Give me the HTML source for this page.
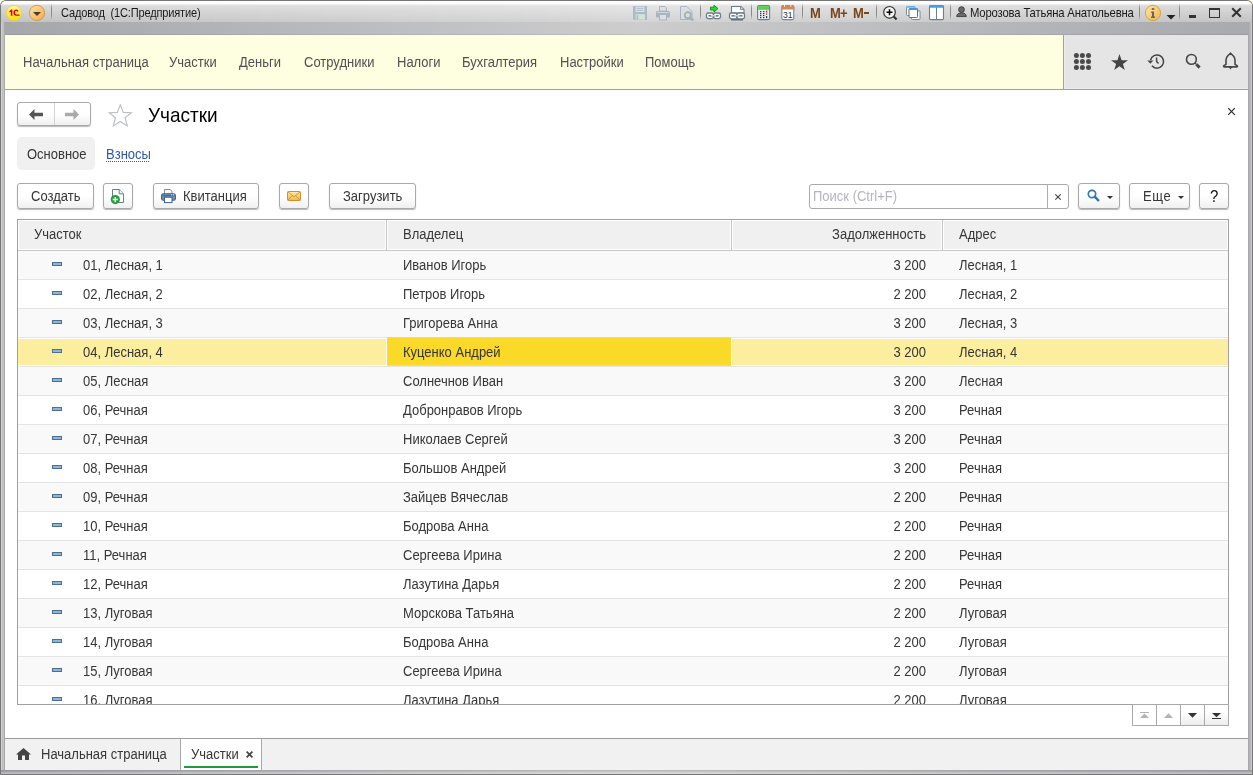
<!DOCTYPE html>
<html><head><meta charset="utf-8">
<style>
*{box-sizing:border-box;margin:0;padding:0}
html,body{width:1253px;height:775px;overflow:hidden;background:#fdfde8}
body{position:relative;font-family:"Liberation Sans",sans-serif;font-size:13px;color:#363636}
.a{position:absolute}
.t{position:absolute;white-space:nowrap;line-height:15px}
#win{position:absolute;left:0;top:0;width:1253px;height:775px;background:#767676;border-radius:6px 6px 0 0;overflow:hidden}
#frame{position:absolute;left:1px;top:1px;width:1251px;height:773px;border-radius:5px 5px 0 0;
 background:linear-gradient(to right,#d2d2d2 0,#d2d2d2 1px,#c0c0c0 1px,#c0c0c0 3px,#ababab 3px,#ababab 4px,transparent 4px,transparent 1247px,#a6a7a9 1247px,#a6a7a9 1248px,#b5b6b9 1248px,#b5b6b9 1249px,#b5b6b9 1249px,#b5b6b9 1250px,#cacacc 1250px),
 linear-gradient(to bottom,transparent 33px,rgba(0,0,0,.08) 33px),linear-gradient(to right,#a6a7ab 0,#abacb0 8%,#bebfc2 32%,#cdcdcd 51%,#b5b6b9 80%,#a9aaae 100%)}
#title{position:absolute;left:1px;top:1px;width:1251px;height:21px;border-radius:5px 5px 0 0;
 background:linear-gradient(#fefefe 0,#fcfcfc 3px,#e8e8e8 4px,#e4e4e4 6px,#d5d5d5 21px)}
#title::after{content:"";position:absolute;left:0;top:0;width:100%;height:100%;border-radius:5px 5px 0 0;
 background:linear-gradient(to right,rgba(40,40,60,.11) 0,rgba(40,40,60,.09) 8%,rgba(40,40,60,.07) 18%,rgba(40,40,60,.04) 32%,rgba(40,40,60,0) 50%,rgba(40,40,60,.06) 80%,rgba(40,40,60,.1) 100%);
 -webkit-mask-image:linear-gradient(transparent 3px,rgba(0,0,0,.55) 4px,#000 21px)}
#content{position:absolute;left:5px;top:35px;width:1243px;height:735px;background:#fff}
#botband{position:absolute;left:1px;top:770px;width:1251px;height:4px;background:linear-gradient(rgba(0,0,0,.12),rgba(0,0,0,0) 2px,rgba(255,255,255,.25) 3px),linear-gradient(to right,#a6a7ab 0,#abacb0 8%,#bebfc2 32%,#cdcdcd 51%,#b5b6b9 80%,#a9aaae 100%)}
.sep{position:absolute;top:3px;width:1px;height:17px;background:linear-gradient(rgba(120,120,120,0),#8a8a8a 30%,#8a8a8a 70%,rgba(120,120,120,0))}
.menu{position:absolute;top:55px;color:#505050;white-space:nowrap;line-height:15px}
.btn{position:absolute;border:1px solid #a9a9a9;border-radius:3px;background:linear-gradient(#fff 0,#fff 50%,#f0f0f0 100%);box-shadow:0 1px 1px rgba(0,0,0,.28)}

#grid{position:absolute;left:17px;top:219px;width:1212px;height:486px;border:1px solid #a0a0a0;overflow:hidden;background:#fff}
#ghead{position:absolute;left:0;top:0;width:1210px;height:31px;border-bottom:1px solid #c8c8c8;background:#fff}
.h{position:absolute;top:1px;height:28px;background:#f0f0f0}
.gsep{position:absolute;top:0;width:1px;height:30px;background:#c6c6c6}
.row{position:absolute;left:0;width:1210px;height:29px;border-bottom:1px solid #e4e4e4;background:#fff}
.row.odd{background:#f9f9f9}
.row span{position:absolute;top:7px;line-height:15px;white-space:nowrap}
.c1{left:65px}.c2{left:385px}.c3{right:302px}.c4{left:941px}
.dash{position:absolute;left:34px;top:11px;width:10px;height:4px;background:#8db6dc;border:1px solid #4d6e8e}
.row.sel{background:#fff}
.row.sel::before{content:"";position:absolute;left:0;top:1px;width:368px;height:26px;background:#fcee9f}
.row.sel::after{content:"";position:absolute;left:714px;top:1px;width:496px;height:26px;background:#fcee9f;box-shadow:-1px 0 0 0 #fff}
.row.sel .c2::before{content:"";position:absolute;left:-16px;top:-6px;width:344px;height:26px;background:#fad928;z-index:-1}
.row.sel .c2{z-index:1}
.row.sel span,.row.sel .dash{z-index:2}

.t,.menu,.row span{transform:scaleY(1.1);transform-origin:0 12px}
.nt{transform:none}
</style></head><body>
<div id="win">
 <div id="frame"></div>
 <div id="title"></div>
 <div id="botband"></div>
 <div id="content"></div>


 <!-- title bar -->
 <svg class="a" style="left:5px;top:4px" width="18" height="18" viewBox="0 0 18 18">
  <defs><linearGradient id="gy" x1="0" y1="0" x2="0" y2="1"><stop offset="0" stop-color="#fff7a0"/><stop offset="1" stop-color="#ffdf00"/></linearGradient>
  <linearGradient id="go" x1="0" y1="0" x2="1" y2="1"><stop offset="0" stop-color="#ffe0a8"/><stop offset="1" stop-color="#f6aa48"/></linearGradient></defs>
  <circle cx="9" cy="8.9" r="7.6" fill="url(#gy)" stroke="#e8cf50" stroke-width="0.8"/>
  <path d="M4.2 7.4L6.2 5.6H7.4V11.8H5.8V7.8L4.6 8.4Z" fill="#e00000"/>
  <path d="M13.6 7.2C13.2 5.9 12.3 5.4 11.2 5.4C9.4 5.4 8.4 6.7 8.4 8.6C8.4 10.5 9.4 11.8 11.2 11.8H14.6V10.4H11.3C10.4 10.4 10 9.7 10 8.6C10 7.5 10.4 6.8 11.2 6.8C11.7 6.8 12 7.1 12.1 7.5Z" fill="#e00000"/>
 </svg>
 <svg class="a" style="left:28px;top:4px" width="18" height="18" viewBox="0 0 18 18">
  <circle cx="9" cy="8.9" r="7.6" fill="url(#go)" stroke="#c99a40" stroke-width="0.9"/>
  <path d="M5 8H13L9 12Z" fill="#4e3b28"/>
 </svg>
 <div class="sep" style="left:51px"></div>
 <div class="t nt" style="left:61px;top:5px;font-size:13px;letter-spacing:-0.2px;color:#1a1a1a;transform:scaleX(0.85);transform-origin:0 0">Садовод&nbsp; (1С:Предприятие)</div>

 <svg class="a" style="left:632px;top:5px" width="66" height="17" viewBox="0 0 66 17" opacity="0.95">
  <!-- floppy -->
  <path d="M1 1H15V15H2L1 14Z" fill="#a9b8c8"/>
  <rect x="3.6" y="1.6" width="8.8" height="5.4" fill="#e3e3e3"/><rect x="4.6" y="2.8" width="6.8" height="1" fill="#a9b8c8"/><rect x="4.6" y="4.9" width="6.8" height="1" fill="#a9b8c8"/>
  <rect x="3.6" y="9.2" width="9.4" height="5.4" fill="#d6e3d6"/><rect x="4.6" y="10.2" width="1.6" height="4.4" fill="#a9b8c8"/>
  <!-- printer -->
  <path d="M27.5 1.5H33L34.5 3V6H27.5Z" fill="#e0e0e0" stroke="#a5b3c3"/>
  <rect x="24" y="6" width="14" height="6.6" rx="1.6" fill="#a5b3c3"/>
  <rect x="27.5" y="9.5" width="7" height="5.5" fill="#e0e0e0" stroke="#a5b3c3"/>
  <rect x="25" y="7.2" width="12" height="0.8" fill="#d8dde3"/>
  <!-- preview -->
  <path d="M48.5 1.5H55L60 6.5V14.5H48.5Z" fill="#dedede" stroke="#a5b3c3"/>
  <circle cx="55.8" cy="10.2" r="3" fill="#dedede" stroke="#a0aeb8" stroke-width="1.7"/>
  <path d="M58 12.4L61.3 15.5" stroke="#a0aeb8" stroke-width="2.2"/>
 </svg>
 <div class="sep" style="left:700px"></div>
 <svg class="a" style="left:705px;top:4px" width="42" height="18" viewBox="0 0 42 18">
  <path d="M5.5 3.2H9V1.2L13 4.6L9 8V6H5.5Z" fill="#20e020" stroke="#138a13" stroke-width="0.9" stroke-linejoin="round"/>
  <rect x="1.5" y="9" width="7" height="5.6" rx="1.8" fill="#fff" stroke="#6d7b8a" stroke-width="1.3"/>
  <rect x="8.5" y="9" width="7" height="5.6" rx="1.8" fill="#fff" stroke="#6d7b8a" stroke-width="1.3"/>
  <rect x="3.5" y="11" width="10" height="1.6" fill="#6d7b8a"/><rect x="6" y="11.3" width="5" height="1" fill="#fff"/>
  <path d="M26.5 2.5H36L39 5.5V9H26.5Z" fill="#fff" stroke="#6d7b8a" stroke-width="1.1"/>
  <path d="M35.5 2.5V5.5H38.5" fill="#cfd6dd" stroke="#6d7b8a" stroke-width="0.8"/>
  <rect x="24.5" y="9" width="7.5" height="5.8" rx="1.8" fill="#fff" stroke="#6d7b8a" stroke-width="1.3"/>
  <rect x="32" y="9" width="7.5" height="5.8" rx="1.8" fill="#fff" stroke="#6d7b8a" stroke-width="1.3"/>
  <rect x="26.5" y="11" width="11" height="1.6" fill="#6d7b8a"/><rect x="29.5" y="11.3" width="5" height="1" fill="#fff"/>
  <rect x="26" y="15" width="12" height="1.5" fill="#5c6f85"/>
 </svg>
 <div class="sep" style="left:751px"></div>
 <svg class="a" style="left:756px;top:4px" width="40" height="17" viewBox="0 0 40 17">
  <rect x="1.6" y="1.6" width="12" height="14" rx="1.4" fill="#e6eef6" stroke="#6f7f8f" stroke-width="1.1"/>
  <rect x="2.2" y="2.2" width="10.8" height="3.6" fill="#52d452"/>
  <g fill="#333"><rect x="4" y="7" width="1.4" height="1.2"/><rect x="7" y="7" width="1.4" height="1.2"/><rect x="4" y="9" width="1.4" height="1.2"/><rect x="7" y="9" width="1.4" height="1.2"/><rect x="4" y="11" width="1.4" height="1.2"/><rect x="7" y="11" width="1.4" height="1.2"/><rect x="4" y="13" width="1.4" height="1.2"/><rect x="7" y="13" width="1.4" height="1.2"/><rect x="10" y="9.5" width="1.2" height="1.2"/><rect x="10" y="12" width="1.2" height="2.2"/></g>
  <rect x="10" y="6.6" width="1.3" height="2" fill="#f01818"/>
  <rect x="25.8" y="1.6" width="12" height="14" rx="1.6" fill="#fff" stroke="#77889a" stroke-width="1.1"/>
  <path d="M25.3 5.6V3.2C25.3 2 26.2 1.2 27.4 1.2H36.2C37.4 1.2 38.3 2 38.3 3.2V5.6Z" fill="#cd8a56"/>
  <rect x="28.2" y="1" width="0.9" height="1.8" fill="#fff"/><rect x="34.4" y="1" width="0.9" height="1.8" fill="#fff"/>
  <text x="31.8" y="14.4" font-family="Liberation Sans" font-size="8.6" text-anchor="middle" fill="#333">31</text>
 </svg>
 <div class="sep" style="left:802px"></div>
 <div class="t" style="left:810px;top:6px;font-size:13px;font-weight:bold;color:#7b451b;letter-spacing:-0.3px">M</div>
 <div class="t" style="left:830px;top:6px;font-size:13px;font-weight:bold;color:#7b451b;letter-spacing:-0.8px">M+</div>
 <div class="t" style="left:853px;top:6px;font-size:13px;font-weight:bold;color:#7b451b;letter-spacing:-0.8px">M</div><div class="a" style="left:864px;top:12px;width:5px;height:2px;background:#7b451b"></div>
 <div class="sep" style="left:876px"></div>
 <svg class="a" style="left:882px;top:5px" width="64" height="16" viewBox="0 0 64 16">
  <circle cx="7.5" cy="7.3" r="5.8" fill="#f4f4f4" stroke="#333" stroke-width="1.2"/>
  <path d="M7.5 4.3V10.3M4.5 7.3H10.5" stroke="#000" stroke-width="1.5"/>
  <path d="M11.5 11.3L14.6 14.6" stroke="#333" stroke-width="2.2"/>
  <rect x="24.5" y="1.5" width="8.5" height="9" rx="1" fill="#f8f8f8" stroke="#6f8090" stroke-width="0.9"/><rect x="24.5" y="1.2" width="8.5" height="1.6" fill="#6db7f2"/>
  <rect x="29.5" y="5.5" width="8.5" height="9" rx="1" fill="#fff" stroke="#6f8090" stroke-width="0.9"/><rect x="29.5" y="5.2" width="8.5" height="1.6" fill="#7cc0f5"/>
  <rect x="27" y="3.5" width="8.5" height="9" rx="1" fill="#fff" stroke="#5c6d7e" stroke-width="1"/><rect x="27" y="3.2" width="8.5" height="1.8" fill="#3d9eee"/>
  <rect x="47.5" y="0.6" width="14" height="14" rx="1.2" fill="#fff" stroke="#6c7d8e" stroke-width="1.1"/>
  <rect x="47.2" y="0.3" width="14.6" height="2.4" rx="1" fill="#3f9fee"/>
  <rect x="54" y="2.6" width="1" height="12" fill="#6c7d8e"/>
 </svg>
 <div class="sep" style="left:950px"></div>
 <svg class="a" style="left:956px;top:6px" width="12" height="12" viewBox="0 0 12 12">
  <circle cx="5.5" cy="3.6" r="2.9" fill="#6a6a6a" stroke="#3a3a3a" stroke-width="0.9"/>
  <path d="M0.7 10.6C0.7 8 2.5 6.9 5.5 6.9C8.5 6.9 10.3 8 10.3 10.6Z" fill="#6a6a6a" stroke="#3a3a3a" stroke-width="0.9"/>
 </svg>
 <div class="t nt" style="left:970px;top:5px;font-size:13px;letter-spacing:-0.2px;color:#1a1a1a;transform:scaleX(0.87);transform-origin:0 0">Морозова Татьяна Анатольевна</div>
 <div class="sep" style="left:1139px"></div>
 <svg class="a" style="left:1144px;top:4px" width="18" height="18" viewBox="0 0 18 18">
  <defs><linearGradient id="gi" x1="0" y1="0" x2="1" y2="1"><stop offset="0" stop-color="#fde6ae"/><stop offset="1" stop-color="#f4b446"/></linearGradient></defs>
  <circle cx="9" cy="8.9" r="7.6" fill="url(#gi)" stroke="#d3a22c" stroke-width="0.9"/>
  <ellipse cx="9" cy="5" rx="1.5" ry="0.9" fill="#5f6868"/>
  <path d="M7.2 7.6H10V12.6H11V14H7V12.6H8V9H7.2Z" fill="#5f6868"/>
 </svg>
 <svg class="a" style="left:1166px;top:15px" width="10" height="5" viewBox="0 0 10 5"><path d="M0.5 0H9.5L5 4.5Z" fill="#222"/></svg>
 <div class="sep" style="left:1179px"></div>
 <div class="a" style="left:1189px;top:15px;width:7px;height:3px;background:#333"></div>
 <div class="a" style="left:1209px;top:8px;width:11px;height:10px;border:1px solid #333;border-top-width:2px"></div>
 <svg class="a" style="left:1231px;top:7px" width="11" height="11" viewBox="0 0 11 11"><path d="M1.2 1.2L9.8 9.8M9.8 1.2L1.2 9.8" stroke="#333" stroke-width="2"/></svg>

 <!-- menu panel -->
 <div class="a" style="left:5px;top:35px;width:1058px;height:54px;background:#fefee0"></div>
 <div class="a" style="left:1063px;top:35px;width:1px;height:55px;background:#a0a0a0"></div>
 <div class="a" style="left:1064px;top:35px;width:184px;height:54px;background:#e5e5e5;border-left:1px solid #ebebeb;border-bottom:1px solid #ebebeb"></div>
 <div class="a" style="left:5px;top:89px;width:1243px;height:1px;background:#a0a0a0"></div>
 <!-- right menu icons -->
 <svg class="a" style="left:1073px;top:52px" width="19" height="19" viewBox="0 0 19 19" fill="#4a4a4a">
  <circle cx="3.4" cy="3.4" r="2.5"/><circle cx="9.4" cy="3.4" r="2.5"/><circle cx="15.5" cy="3.4" r="2.5"/>
  <circle cx="3.4" cy="9.4" r="2.5"/><circle cx="9.4" cy="9.4" r="2.5"/><circle cx="15.5" cy="9.4" r="2.5"/>
  <circle cx="3.4" cy="15.5" r="2.5"/><circle cx="9.4" cy="15.5" r="2.5"/><circle cx="15.5" cy="15.5" r="2.5"/>
 </svg>
 <svg class="a" style="left:1110px;top:53px" width="19" height="18" viewBox="0 0 19 18"><path d="M9.5 1L11.6 7.2H18L12.9 10.9L14.8 17L9.5 13.3L4.2 17L6.1 10.9L1 7.2H7.4Z" fill="#444"/></svg>
 <svg class="a" style="left:1146px;top:52px" width="20" height="19" viewBox="0 0 20 19">
  <path d="M5.9 13.8A6.6 6.6 0 1 0 4.5 8.2" fill="none" stroke="#474747" stroke-width="1.55"/>
  <path d="M1.3 8.4H7.4L4.4 11.8Z" fill="#474747"/>
  <path d="M10.6 5.4V9.7L12.6 11.3" fill="none" stroke="#474747" stroke-width="1.5"/>
 </svg>
 <svg class="a" style="left:1184px;top:52px" width="19" height="19" viewBox="0 0 19 19">
  <circle cx="7.4" cy="7.4" r="4.9" fill="none" stroke="#474747" stroke-width="1.6"/>
  <path d="M10.9 10.9L12 12" stroke="#474747" stroke-width="1.6"/>
  <path d="M12.3 12.3L15.6 15.6" stroke="#474747" stroke-width="2.9"/>
 </svg>
 <svg class="a" style="left:1222px;top:52px" width="17" height="19" viewBox="0 0 17 19">
  <path d="M8.5 1.6C5.6 3.4 4 5.2 4 8.2V12.3L1.9 13.7C1.3 14.1 1.4 14.9 2.2 14.9H14.8C15.6 14.9 15.7 14.1 15.1 13.7L13 12.3V8.2C13 5.2 11.4 3.4 8.5 1.6Z" fill="none" stroke="#474747" stroke-width="1.6" stroke-linejoin="round"/>
  <path d="M6.8 2.2L8.5 0.1L10.2 2.2Z M6.3 14.6H10.7L8.5 17.6Z" fill="#474747"/>
 </svg>

 <div class="menu" style="left:23px">Начальная страница</div>
 <div class="menu" style="left:169px">Участки</div>
 <div class="menu" style="left:239px">Деньги</div>
 <div class="menu" style="left:304px">Сотрудники</div>
 <div class="menu" style="left:397px">Налоги</div>
 <div class="menu" style="left:462px">Бухгалтерия</div>
 <div class="menu" style="left:560px">Настройки</div>
 <div class="menu" style="left:645px">Помощь</div>

 <!-- nav buttons -->
 <div class="btn" style="left:17px;top:102px;width:74px;height:24px"></div>
 <div class="a" style="left:54px;top:103px;width:1px;height:22px;background:#d4d4d4"></div>
 <svg class="a" style="left:29px;top:109px" width="14" height="11" viewBox="0 0 14 11"><path d="M0 5.5L5.5 0V3.8H14V7.2H5.5V11Z" fill="#555"/></svg>
 <svg class="a" style="left:65px;top:109px" width="14" height="11" viewBox="0 0 14 11"><path d="M14 5.5L8.5 0V3.8H0V7.2H8.5V11Z" fill="#aaa"/></svg>
 <svg class="a" style="left:108px;top:104px" width="25" height="23" viewBox="0 0 25 23"><path d="M12.3 0.8L15.3 8.4L23.3 8.7L17.1 13.7L19.3 21.9L12.3 17.4L5.3 21.9L7.5 13.7L1.3 8.7L9.3 8.4Z" fill="none" stroke="#bcc0c5" stroke-width="1.15" stroke-linejoin="miter"/></svg>
 <div class="t" style="left:148px;top:105px;font-size:19px;line-height:21px;transform-origin:0 17px;color:#000">Участки</div>
 <svg class="a" style="left:1227px;top:107px" width="9" height="9" viewBox="0 0 9 9"><path d="M1.2 1.2L7.8 7.8M7.8 1.2L1.2 7.8" stroke="#2a2a2a" stroke-width="1.2"/></svg>

 <!-- tabs -->
 <div class="a" style="left:17px;top:137px;width:78px;height:33px;background:#f0f0f0;border-radius:5px"></div>
 <div class="t" style="left:27px;top:147px">Основное</div>
 <div class="t" style="left:106px;top:147px;color:#3057b0">Взносы</div>
 <div class="a" style="left:106px;top:161px;width:44px;height:1px;background:repeating-linear-gradient(to right,#3057b0 0,#3057b0 1px,transparent 1px,transparent 2px)"></div>

 <!-- toolbar -->
 <div class="btn" style="left:17px;top:183px;width:77px;height:26px"></div>
 <div class="t" style="left:31px;top:189px">Создать</div>
 <div class="btn" style="left:103px;top:183px;width:30px;height:26px"></div>
 <svg class="a" style="left:110px;top:189px" width="16" height="18" viewBox="0 0 16 18"><path d="M2.5 0.5H9.2L13.5 4.8V13.5H2.5Z" fill="#fff" stroke="#6a7f95"/><path d="M9.2 0.5V4.8H13.5" fill="#eef1f4" stroke="#6a7f95"/><circle cx="5.3" cy="10.6" r="4.6" fill="#22a036"/><path d="M5.3 8V13.2M2.7 10.6H7.9" stroke="#fff" stroke-width="1.5"/></svg>
 <div class="btn" style="left:153px;top:183px;width:106px;height:26px"></div>
 <svg class="a" style="left:161px;top:189px" width="15" height="15" viewBox="0 0 15 15"><path d="M3.5 0.5H9.2L11 2.3V5.5H3.5Z" fill="#fff" stroke="#6f8295" stroke-width="0.9"/><rect x="0.6" y="4.8" width="13.8" height="6.4" rx="1.8" fill="#6f95bd" stroke="#3c5e85" stroke-width="1.1"/><rect x="1.5" y="6.2" width="12" height="0.9" fill="#3c5e85"/><rect x="10.2" y="5.4" width="1" height="0.9" fill="#fff"/><rect x="12" y="5.4" width="1" height="0.9" fill="#fff"/><rect x="3.5" y="8.2" width="7.5" height="5.4" fill="#fff" stroke="#3c5e85" stroke-width="1"/></svg>
 <div class="t" style="left:183px;top:189px">Квитанция</div>
 <div class="btn" style="left:279px;top:183px;width:30px;height:26px"></div>
 <svg class="a" style="left:287px;top:191px" width="14" height="10" viewBox="0 0 14 10"><defs><linearGradient id="ge" x1="0" y1="0" x2="0" y2="1"><stop offset="0" stop-color="#fde9b0"/><stop offset="1" stop-color="#f2b650"/></linearGradient></defs><rect x="0.5" y="0.5" width="13" height="9" rx="1" fill="url(#ge)" stroke="#cf9127"/><path d="M0.8 0.8L7 5.8L13.2 0.8M0.8 9.2L5.3 4.6M13.2 9.2L8.7 4.6" fill="none" stroke="#cf9127" stroke-width="0.9"/></svg>
 <div class="btn" style="left:329px;top:183px;width:87px;height:26px"></div>
 <div class="t" style="left:343px;top:189px">Загрузить</div>

 <!-- search -->
 <div class="a" style="left:809px;top:184px;width:260px;height:25px;border:1px solid #a9a9a9;border-radius:3px;background:#fff"></div>
 <div class="a" style="left:1047px;top:185px;width:1px;height:23px;background:#adadad"></div>
 <div class="t" style="left:813px;top:189px;color:#b5b5be">Поиск (Ctrl+F)</div>
 <svg class="a" style="left:1054px;top:193px" width="8" height="8" viewBox="0 0 8 8"><path d="M1.3 1.3L6.7 6.7M6.7 1.3L1.3 6.7" stroke="#444" stroke-width="1.1"/></svg>
 <div class="btn" style="left:1078px;top:183px;width:42px;height:26px"></div>
 <svg class="a" style="left:1087px;top:189px" width="13" height="13" viewBox="0 0 13 13"><circle cx="5" cy="5" r="3.7" fill="none" stroke="#2f78b6" stroke-width="1.7"/><path d="M7.7 7.7L11.3 11.3" stroke="#2f78b6" stroke-width="2.4" stroke-linecap="round"/></svg>
 <svg class="a" style="left:1107px;top:196px" width="6" height="3" viewBox="0 0 6 3"><path d="M0 0H6L3 3Z" fill="#333"/></svg>
 <div class="btn" style="left:1129px;top:183px;width:61px;height:26px"></div>
 <div class="t" style="left:1143px;top:189px;letter-spacing:0.6px">Еще</div>
 <svg class="a" style="left:1178px;top:196px" width="6" height="3" viewBox="0 0 6 3"><path d="M0 0H6L3 3Z" fill="#333"/></svg>
 <div class="btn" style="left:1199px;top:183px;width:30px;height:26px"></div>
 <div class="t nt" style="left:1210px;top:188px;font-size:15px;line-height:17px;color:#111;transform:scaleY(1.1);transform-origin:0 14px">?</div>

 <!-- grid -->
 <div id="grid">
  <div id="ghead">
   <div class="h" style="left:1px;width:366px"></div>
   <div class="h" style="left:370px;width:342px"></div>
   <div class="h" style="left:715px;width:208px"></div>
   <div class="h" style="left:926px;width:283px"></div>
   <div class="gsep" style="left:368px"></div><div class="gsep" style="left:713px"></div><div class="gsep" style="left:924px"></div>
   <span class="t" style="left:16px;top:7px">Участок</span>
   <span class="t" style="left:385px;top:7px">Владелец</span>
   <span class="t" style="right:302px;top:7px">Задолженность</span>
   <span class="t" style="left:941px;top:7px">Адрес</span>
  </div>
<div class="row odd" style="top:31px"><i class="dash"></i><span class="c1">01, Лесная, 1</span><span class="c2">Иванов Игорь</span><span class="c3">3 200</span><span class="c4">Лесная, 1</span></div>
<div class="row" style="top:60px"><i class="dash"></i><span class="c1">02, Лесная, 2</span><span class="c2">Петров Игорь</span><span class="c3">2 200</span><span class="c4">Лесная, 2</span></div>
<div class="row odd" style="top:89px"><i class="dash"></i><span class="c1">03, Лесная, 3</span><span class="c2">Григорева Анна</span><span class="c3">3 200</span><span class="c4">Лесная, 3</span></div>
<div class="row sel" style="top:118px"><i class="dash"></i><span class="c1">04, Лесная, 4</span><span class="c2">Куценко Андрей</span><span class="c3">3 200</span><span class="c4">Лесная, 4</span></div>
<div class="row odd" style="top:147px"><i class="dash"></i><span class="c1">05, Лесная</span><span class="c2">Солнечнов Иван</span><span class="c3">3 200</span><span class="c4">Лесная</span></div>
<div class="row" style="top:176px"><i class="dash"></i><span class="c1">06, Речная</span><span class="c2">Добронравов Игорь</span><span class="c3">3 200</span><span class="c4">Речная</span></div>
<div class="row odd" style="top:205px"><i class="dash"></i><span class="c1">07, Речная</span><span class="c2">Николаев Сергей</span><span class="c3">3 200</span><span class="c4">Речная</span></div>
<div class="row" style="top:234px"><i class="dash"></i><span class="c1">08, Речная</span><span class="c2">Большов Андрей</span><span class="c3">3 200</span><span class="c4">Речная</span></div>
<div class="row odd" style="top:263px"><i class="dash"></i><span class="c1">09, Речная</span><span class="c2">Зайцев Вячеслав</span><span class="c3">2 200</span><span class="c4">Речная</span></div>
<div class="row" style="top:292px"><i class="dash"></i><span class="c1">10, Речная</span><span class="c2">Бодрова Анна</span><span class="c3">2 200</span><span class="c4">Речная</span></div>
<div class="row odd" style="top:321px"><i class="dash"></i><span class="c1">11, Речная</span><span class="c2">Сергеева Ирина</span><span class="c3">2 200</span><span class="c4">Речная</span></div>
<div class="row" style="top:350px"><i class="dash"></i><span class="c1">12, Речная</span><span class="c2">Лазутина Дарья</span><span class="c3">2 200</span><span class="c4">Речная</span></div>
<div class="row odd" style="top:379px"><i class="dash"></i><span class="c1">13, Луговая</span><span class="c2">Морскова Татьяна</span><span class="c3">2 200</span><span class="c4">Луговая</span></div>
<div class="row" style="top:408px"><i class="dash"></i><span class="c1">14, Луговая</span><span class="c2">Бодрова Анна</span><span class="c3">2 200</span><span class="c4">Луговая</span></div>
<div class="row odd" style="top:437px"><i class="dash"></i><span class="c1">15, Луговая</span><span class="c2">Сергеева Ирина</span><span class="c3">2 200</span><span class="c4">Луговая</span></div>
<div class="row" style="top:466px"><i class="dash"></i><span class="c1">16, Луговая</span><span class="c2">Лазутина Дарья</span><span class="c3">2 200</span><span class="c4">Луговая</span></div>
 </div>
 <!-- grid nav buttons -->
 <div class="a" style="left:1132px;top:704px;width:97px;height:22px;border:1px solid #a9a9a9;background:#fff"></div>
 <div class="a" style="left:1181px;top:705px;width:47px;height:20px;background:linear-gradient(#fff 30%,#ededed)"></div>
 <div class="a" style="left:1156px;top:705px;width:1px;height:20px;background:#a9a9a9"></div>
 <div class="a" style="left:1180px;top:705px;width:1px;height:20px;background:#a9a9a9"></div>
 <div class="a" style="left:1204px;top:705px;width:1px;height:20px;background:#a9a9a9"></div>
 <svg class="a" style="left:1140px;top:712px" width="10" height="7" viewBox="0 0 10 7"><rect x="0" y="0" width="9" height="1" fill="#b3b3b3"/><path d="M0 6L4.5 1.5L9 6Z" fill="#b3b3b3"/></svg>
 <svg class="a" style="left:1164px;top:713px" width="10" height="6" viewBox="0 0 10 6"><path d="M0 5L4.5 0.3L9 5Z" fill="#b3b3b3"/></svg>
 <svg class="a" style="left:1188px;top:713px" width="10" height="6" viewBox="0 0 10 6"><path d="M0 0L4.5 4.8L9 0Z" fill="#333"/></svg>
 <svg class="a" style="left:1212px;top:713px" width="10" height="7" viewBox="0 0 10 7"><path d="M0 0L4.5 4.3L9 0Z" fill="#333"/><rect x="0" y="5" width="9" height="1" fill="#333"/></svg>

 <!-- bottom tab bar -->
 <div class="a" style="left:5px;top:738px;width:1243px;height:1px;background:#9c9c9c"></div>
 <div class="a" style="left:5px;top:739px;width:1243px;height:31px;background:#f1f1f1"></div>
 <div class="a" style="left:180px;top:739px;width:1px;height:31px;background:#a8a8a8"></div>
 <div class="a" style="left:181px;top:739px;width:80px;height:31px;background:#fff"></div>
 <div class="a" style="left:261px;top:739px;width:1px;height:31px;background:#a8a8a8"></div>
 <svg class="a" style="left:16px;top:748px" width="15" height="12" viewBox="0 0 15 12"><path d="M7.5 0L15 6.6H13V12H9V7.5H6V12H2V6.6H0Z" fill="#444"/></svg>
 <div class="t" style="left:41px;top:747px">Начальная страница</div>
 <div class="t" style="left:191px;top:747px">Участки</div>
 <svg class="a" style="left:246px;top:751px" width="7" height="7" viewBox="0 0 7 7"><path d="M0.6 0.6L6.4 6.4M6.4 0.6L0.6 6.4" stroke="#444" stroke-width="1.7"/></svg>
 <div class="a" style="left:184px;top:766px;width:74px;height:2px;background:#1e9a3e"></div>
</div>
</body></html>
